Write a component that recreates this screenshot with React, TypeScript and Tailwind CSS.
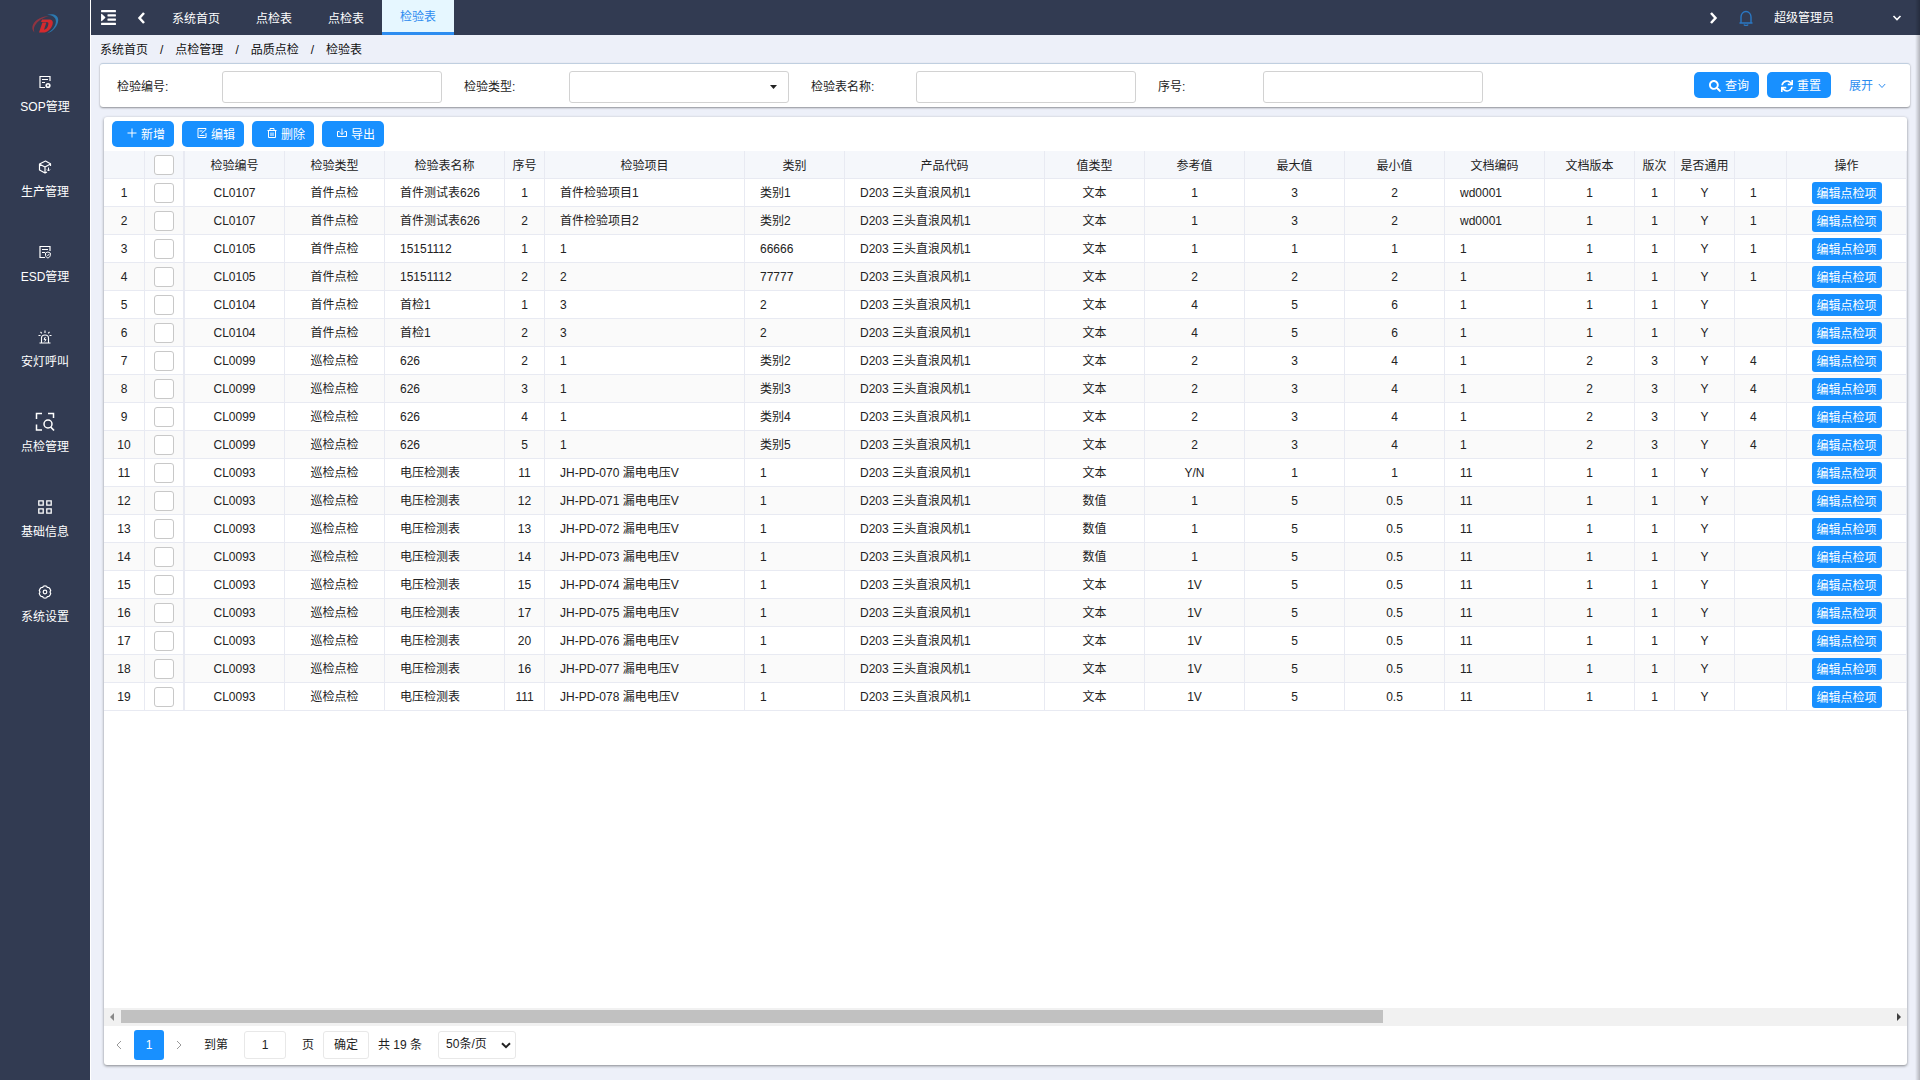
import React from "react";
import { FaIndent, FaSearch, FaSync } from "react-icons/fa";

type Row = [
  code: string, type: string, name: string, seq: string, item: string, category: string,
  valueType: string, ref: string, max: string, min: string, doc: string,
  docVer: string, ver: string, common: string, extra: string,
];

const rows: Row[] = [
  ["CL0107", "首件点检", "首件测试表626", "1", "首件检验项目1", "类别1", "文本", "1", "3", "2", "wd0001", "1", "1", "Y", "1"],
  ["CL0107", "首件点检", "首件测试表626", "2", "首件检验项目2", "类别2", "文本", "1", "3", "2", "wd0001", "1", "1", "Y", "1"],
  ["CL0105", "首件点检", "15151112", "1", "1", "66666", "文本", "1", "1", "1", "1", "1", "1", "Y", "1"],
  ["CL0105", "首件点检", "15151112", "2", "2", "77777", "文本", "2", "2", "2", "1", "1", "1", "Y", "1"],
  ["CL0104", "首件点检", "首检1", "1", "3", "2", "文本", "4", "5", "6", "1", "1", "1", "Y", ""],
  ["CL0104", "首件点检", "首检1", "2", "3", "2", "文本", "4", "5", "6", "1", "1", "1", "Y", ""],
  ["CL0099", "巡检点检", "626", "2", "1", "类别2", "文本", "2", "3", "4", "1", "2", "3", "Y", "4"],
  ["CL0099", "巡检点检", "626", "3", "1", "类别3", "文本", "2", "3", "4", "1", "2", "3", "Y", "4"],
  ["CL0099", "巡检点检", "626", "4", "1", "类别4", "文本", "2", "3", "4", "1", "2", "3", "Y", "4"],
  ["CL0099", "巡检点检", "626", "5", "1", "类别5", "文本", "2", "3", "4", "1", "2", "3", "Y", "4"],
  ["CL0093", "巡检点检", "电压检测表", "11", "JH-PD-070 漏电电压V", "1", "文本", "Y/N", "1", "1", "11", "1", "1", "Y", ""],
  ["CL0093", "巡检点检", "电压检测表", "12", "JH-PD-071 漏电电压V", "1", "数值", "1", "5", "0.5", "11", "1", "1", "Y", ""],
  ["CL0093", "巡检点检", "电压检测表", "13", "JH-PD-072 漏电电压V", "1", "数值", "1", "5", "0.5", "11", "1", "1", "Y", ""],
  ["CL0093", "巡检点检", "电压检测表", "14", "JH-PD-073 漏电电压V", "1", "数值", "1", "5", "0.5", "11", "1", "1", "Y", ""],
  ["CL0093", "巡检点检", "电压检测表", "15", "JH-PD-074 漏电电压V", "1", "文本", "1V", "5", "0.5", "11", "1", "1", "Y", ""],
  ["CL0093", "巡检点检", "电压检测表", "17", "JH-PD-075 漏电电压V", "1", "文本", "1V", "5", "0.5", "11", "1", "1", "Y", ""],
  ["CL0093", "巡检点检", "电压检测表", "20", "JH-PD-076 漏电电压V", "1", "文本", "1V", "5", "0.5", "11", "1", "1", "Y", ""],
  ["CL0093", "巡检点检", "电压检测表", "16", "JH-PD-077 漏电电压V", "1", "文本", "1V", "5", "0.5", "11", "1", "1", "Y", ""],
  ["CL0093", "巡检点检", "电压检测表", "111", "JH-PD-078 漏电电压V", "1", "文本", "1V", "5", "0.5", "11", "1", "1", "Y", ""],
];

const PRODUCT = "D203 三头直浪风机1";

type Column = { title: string; width: string; left?: boolean; value: (r: Row) => string };

const columns: Column[] = [
  { title: "检验编号", width: "w-[100px]", value: (r) => r[0] },
  { title: "检验类型", width: "w-[100px]", value: (r) => r[1] },
  { title: "检验表名称", width: "w-[120px]", left: true, value: (r) => r[2] },
  { title: "序号", width: "w-[40px]", value: (r) => r[3] },
  { title: "检验项目", width: "w-[200px]", left: true, value: (r) => r[4] },
  { title: "类别", width: "w-[100px]", left: true, value: (r) => r[5] },
  { title: "产品代码", width: "w-[200px]", left: true, value: () => PRODUCT },
  { title: "值类型", width: "w-[100px]", value: (r) => r[6] },
  { title: "参考值", width: "w-[100px]", value: (r) => r[7] },
  { title: "最大值", width: "w-[100px]", value: (r) => r[8] },
  { title: "最小值", width: "w-[100px]", value: (r) => r[9] },
  { title: "文档编码", width: "w-[100px]", left: true, value: (r) => r[10] },
  { title: "文档版本", width: "w-[90px]", value: (r) => r[11] },
  { title: "版次", width: "w-[40px]", value: (r) => r[12] },
  { title: "是否通用", width: "w-[60px]", value: (r) => r[13] },
  { title: "", width: "", left: true, value: (r) => r[14] },
];

function Svg({ className, box = 16, children }: { className: string; box?: number; children: React.ReactNode }) {
  return (
    <svg className={className} viewBox={`0 0 ${box} ${box}`} fill="none" stroke="currentColor" aria-hidden="true">
      {children}
    </svg>
  );
}

const DocIcon = ({ variant }: { variant: "gear" | "shield" }) => (
  <Svg className="size-[14px]" box={14}>
    <path d="M12 6V1.500H2v11h5M4 4.500h6M4 7.500h3" strokeWidth="1.200" />
    {variant === "gear" ? (
      <>
        <circle cx="10" cy="10.500" r="2.600" fill="currentColor" stroke="none" />
        <circle cx="10" cy="10.500" r="0.900" fill="#323b52" stroke="none" />
      </>
    ) : (
      <path d="M7.500 8l2.400-1 2.400 1v2.200c0 1.300-1 2.200-2.400 2.800-1.400-.6-2.400-1.500-2.400-2.800zM9 9.800l.8.8 1.300-1.500" strokeWidth="1" />
    )}
  </Svg>
);

const menu: { label: string; icon: React.ReactNode }[] = [
  { label: "SOP管理", icon: <DocIcon variant="gear" /> },
  {
    label: "生产管理",
    icon: (
      <Svg className="size-[14px]" box={14}>
        <path d="M12.500 6V3.800L7.500 1 1.500 4v6L7 13V7L1.800 4.200M7 7l5.500-3M7 13l2-1" strokeWidth="1.200" strokeLinejoin="round" />
        <path d="M10.500 7.500v3.500M9 9.500l1.500 1.500L12 9.500" strokeWidth="1" />
      </Svg>
    ),
  },
  { label: "ESD管理", icon: <DocIcon variant="shield" /> },
  {
    label: "安灯呼叫",
    icon: (
      <Svg className="size-[14px]" box={14}>
        <path d="M3.500 13V8a3.500 3 0 0 1 7 0v5M1.500 13h11M7 .5v2.500M2.500 1.800l1.300 1.600M11.500 1.800l-1.300 1.600M.5 5.500h2M11.500 5.500h2" strokeWidth="1.100" />
        <path d="M7.400 7L6 9.400h2L6.700 11.600" strokeWidth="1" />
      </Svg>
    ),
  },
  {
    label: "点检管理",
    icon: (
      <Svg className="size-[20px]" box={20}>
        <path d="M1.500 7V1.500H7M13 1.500h5.500V6M1.500 12.500v5.500H7" strokeWidth="1.500" />
        <circle cx="13" cy="12" r="4" strokeWidth="1.500" />
        <path d="M15.700 15l3.300 3.500" strokeWidth="1.700" />
      </Svg>
    ),
  },
  {
    label: "基础信息",
    icon: (
      <Svg className="size-[14px]" box={14}>
        <path d="M.8.8h4.400v4.400H.8zM8.800.8h4.400v4.400H8.800zM.8 8.800h4.400v4.400H.8zM8.800 8.800h4.400v4.400H8.800z" strokeWidth="1.300" />
      </Svg>
    ),
  },
  {
    label: "系统设置",
    icon: (
      <Svg className="size-[14px]" box={14}>
        <path d="M5.300 1.200Q7 .6 8.700 1.200l.6 1.200 1.500.1q1.400 1.100 1.900 2.900L12 7l.7 1.600q-.5 1.800-1.900 2.900l-1.500.1-.6 1.200q-1.700.6-3.400 0l-.6-1.200-1.500-.1Q1.800 10.400 1.300 8.600L2 7l-.7-1.600q.5-1.800 1.900-2.900l1.500-.1z" strokeWidth="1.200" strokeLinejoin="round" />
        <circle cx="7" cy="7" r="1.800" strokeWidth="1.200" />
      </Svg>
    ),
  },
];

const tools: { label: string; icon: React.ReactNode }[] = [
  { label: "新增", icon: <path d="M5 .5v9M.5 5h9" /> },
  { label: "编辑", icon: <path d="M9 5v4.500H1v-9h8v1M2.500 3h3M2.500 7.500h5M4.500 5.500L9 1.500" /> },
  { label: "删除", icon: <path d="M.5 2.500h9M3 2.500v-2h4v2M1.500 2.500v7h7v-7M4 4.500v3.500M6 4.500v3.500" /> },
  { label: "导出", icon: <path d="M2.500 3.500h-2v5h9v-5h-2M5 .5v6M3 4.500l2 2 2-2" /> },
];

function Sidebar() {
  return (
    <aside className="w-[91px] shrink-0 border-r border-white bg-[#323b52] text-white">
      <div className="flex h-[50px] items-end justify-center pb-4">
        <svg className="h-5 w-[27px]" viewBox="0 0 27 20" aria-label="logo" role="img">
          <path d="M15 .8C21 -.8 26.500 1 26.200 6.500c-.3 5.500-5 11-11.200 13 5-2.800 8.800-7.500 8.900-12C24 3 20 1.200 15 .8z" fill="#2c79b0" />
          <path d="M17 2.200C9 1.500 1.500 7 .4 12.500c-.4 2.300.3 4.500 2.200 6C1.500 16.500 1.600 14 3 11.500 5.500 7 11 3.300 17 2.200z" fill="#8f3441" />
          <path d="M10 5.500h6.500c4 0 5 2 4 5.200-1.300 4-5 7.800-9.500 7.800H7l3.400-10h4l-2.400 7.200c2-.3 3.300-1.900 4.100-4.300.8-2.400.2-3.400-1.700-3.400H9z" fill="#d22a2e" />
        </svg>
      </div>
      <nav>
        {menu.map((m) => (
          <a key={m.label} href="#" className="flex h-[85px] flex-col items-center pt-[21px]">
            <span className="flex h-[22px] items-center">{m.icon}</span>
            <span className="mt-[5px] leading-[18px]">{m.label}</span>
          </a>
        ))}
      </nav>
    </aside>
  );
}

function TopBar() {
  return (
    <header className="flex h-[35px] items-center bg-[#323b52] text-white">
      <button className="ml-[9px]" aria-label="折叠菜单">
        <FaIndent className="h-[17px] w-[17px]" />
      </button>
      <button className="ml-[19px]" aria-label="向左">
        <Svg className="h-3 w-3" box={12}><path d="M8 1L3.500 6 8 11" strokeWidth="2.500" /></Svg>
      </button>
      <nav className="ml-1.5 flex h-full">
        {["系统首页", "点检表", "点检表"].map((t, i) => (
          <a key={i} href="#" className="px-[18px] pt-2.5 leading-[18px]">{t}</a>
        ))}
        <a href="#" className="border-b-[3px] border-[#2d8cf0] bg-[#e6f7ff] px-[18px] pt-2 leading-[18px] text-[#2d8cf0]">检验表</a>
      </nav>
      <button className="ml-auto" aria-label="向右">
        <Svg className="h-3 w-3" box={12}><path d="M4 1l4.500 5L4 11" strokeWidth="2.500" /></Svg>
      </button>
      <button className="ml-[19px] text-[#2a78c4]" aria-label="通知">
        <Svg className="size-4"><path d="M1.500 13h13M3 13V7a5 5.500 0 0 1 10 0v6M6 14.500c.5 1.300 3.500 1.300 4 0" strokeWidth="1.400" /></Svg>
      </button>
      <button className="ml-5 mr-[18px] flex w-[128px] items-center justify-between pt-px">
        <span className="leading-[18px]">超级管理员</span>
        <Svg className="size-2.5" box={10}><path d="M1.500 3L5 6.500 8.500 3" strokeWidth="1.600" /></Svg>
      </button>
    </header>
  );
}

const fields = ["检验编号", "检验类型", "检验表名称", "序号"];

function SearchCard() {
  return (
    <form className="ml-[9px] mr-2.5 flex h-11 items-start rounded-[3px] border-t border-[#c0cfe0] bg-white pl-4 pt-[7px] shadow-[0_1px_2px_rgba(0,0,0,0.4)]">
      {fields.map((f, i) => (
        <div key={f} className="mr-[21px] flex items-center">
          <label htmlFor={`f${i}`} className="w-[106px] pl-px leading-[18px]">{f}:</label>
          {i === 1 ? (
            <div className="relative">
              <select id="f1" defaultValue="" className="h-8 w-[220px] appearance-none rounded-[3px] border border-[#d2d2d2] bg-white px-2">
                <option value=""></option>
              </select>
              <svg className="pointer-events-none absolute right-3 top-[14px] h-1 w-[7px]" viewBox="0 0 7 4" aria-hidden="true">
                <path d="M0 0h7L3.500 4z" fill="#222" />
              </svg>
            </div>
          ) : (
            <input id={`f${i}`} type="text" className="h-8 w-[220px] rounded-[3px] border border-[#d2d2d2] bg-white px-2" />
          )}
        </div>
      ))}
      <div className="ml-auto mr-6 flex items-center pt-px">
        <button type="button" className="flex h-[26px] w-[65px] items-center gap-1 rounded-[5px] bg-[#1890ff] pl-[15px] pt-px text-white">
          <FaSearch className="size-3" />查询
        </button>
        <button type="button" className="ml-2 flex h-[26px] w-[64px] items-center gap-1 rounded-[5px] bg-[#1890ff] pl-[14px] pt-px text-white">
          <FaSync className="size-3" />重置
        </button>
        <a href="#" className="ml-[18px] flex items-center gap-[5px] pt-px text-[#2d8cf0]">
          展开
          <Svg className="size-2" box={8}><path d="M.8 2L4 5.500 7.200 2" /></Svg>
        </a>
      </div>
    </form>
  );
}

const box = "block mx-auto size-5 appearance-none rounded-[3px] border border-[#c8c8c8] bg-white";
const cell = "h-7 border-b border-r border-[#e8eaf2] overflow-hidden";

function DataTable() {
  return (
    <table className="w-full table-fixed border-separate border-spacing-0 leading-[18px]">
      <colgroup>
        <col className="w-[41px]" />
        <col className="w-[40px]" />
        {columns.map((c, i) => <col key={i} className={c.width} />)}
        <col className="w-[120px]" />
      </colgroup>
      <thead>
        <tr className="bg-[#f5f7fb]">
          <th className={cell}></th>
          <th className={`${cell} border-r-2`}><input type="checkbox" aria-label="全选" className={box} /></th>
          {columns.map((c, i) => (
            <th key={i} className={`${cell} whitespace-nowrap pt-0.5 font-normal`}>{c.title}</th>
          ))}
          <th className={`${cell} pt-0.5 font-normal`}>操作</th>
        </tr>
      </thead>
      <tbody>
        {rows.map((r, i) => (
          <tr key={i} className="odd:bg-white even:bg-[#fafafa]">
            <td className={`${cell} text-center`}>{i + 1}</td>
            <td className={`${cell} border-r-2`}>
              <input type="checkbox" aria-label={`选择第${i + 1}行`} className={box} />
            </td>
            {columns.map((c, j) => (
              <td key={j} className={`${cell} whitespace-nowrap ${c.left ? "pl-[15px] text-left" : "text-center"}`}>{c.value(r)}</td>
            ))}
            <td className={cell}>
              <button className="mx-auto block h-[22px] w-[70px] rounded-[3px] bg-[#1890ff] pt-px leading-[22px] text-white">编辑点检项</button>
            </td>
          </tr>
        ))}
      </tbody>
    </table>
  );
}

function ScrollBar() {
  return (
    <div className="mt-auto flex h-[18px] items-start bg-[#f1f1f1] px-[5px] pt-0.5">
      <svg className="ml-px mt-[3px] h-2 w-1" viewBox="0 0 4 8" aria-hidden="true"><path d="M4 0v8L0 4z" fill="#8a8a8a" /></svg>
      <div className="ml-[7px] mr-2 h-[13px] flex-1">
        <div className="h-full w-[71.4%] bg-[#c1c1c1]" />
      </div>
      <svg className="mr-px mt-[3px] h-2 w-1" viewBox="0 0 4 8" aria-hidden="true"><path d="M0 0v8l4-4z" fill="#404040" /></svg>
    </div>
  );
}

function Pager() {
  return (
    <div className="flex h-[39px] items-center pb-px pl-2.5 leading-[18px]">
      <button aria-label="上一页" className="text-[#999]">
        <Svg className="size-2.5" box={10}><path d="M7 1L3 5l4 4" /></Svg>
      </button>
      <button className="ml-2.5 size-[30px] rounded-[3px] bg-[#1890ff] text-white">1</button>
      <button aria-label="下一页" className="ml-2.5 text-[#999]">
        <Svg className="size-2.5" box={10}><path d="M3 1l4 4-4 4" /></Svg>
      </button>
      <label htmlFor="page" className="ml-5">到第</label>
      <input id="page" type="text" defaultValue="1" className="ml-4 h-7 w-[42px] rounded-[3px] border border-[#e8e8e8] text-center" />
      <span className="ml-4">页</span>
      <button className="ml-[9px] h-7 w-[46px] rounded-[3px] border border-[#e8e8e8]">确定</button>
      <span className="ml-[9px]">共 19 条</span>
      <div className="relative ml-4">
        <select aria-label="每页条数" className="h-7 w-[78px] appearance-none rounded-[3px] border border-[#e8e8e8] bg-white pb-0.5 pl-[7px]">
          <option>50条/页</option>
        </select>
        <svg className="pointer-events-none absolute right-[5px] top-[11px] h-[7px] w-2.5" viewBox="0 0 10 7" fill="none" aria-hidden="true">
          <path d="M1 1.200l4 4 4-4" stroke="#222" strokeWidth="2" />
        </svg>
      </div>
    </div>
  );
}

export default function App() {
  return (
    <div className="flex min-h-screen bg-[#edf0f9] font-['Liberation_Sans','Noto_Sans_CJK_SC',sans-serif] text-xs text-[#222]">
      <Sidebar />
      <div className="relative flex min-w-0 flex-1 flex-col">
        <TopBar />
        <nav className="flex h-7 pl-[9px] pt-1.5 leading-[18px] text-[#111]">
          {["系统首页", "点检管理", "品质点检", "检验表"].map((t, i) => (
            <React.Fragment key={t}>
              {i > 0 && <span className="mx-3">/</span>}
              <a href="#">{t}</a>
            </React.Fragment>
          ))}
        </nav>
        <SearchCard />
        <main className="mb-[15px] ml-[13px] mr-[13px] mt-2.5 flex flex-1 flex-col overflow-hidden rounded-[3px] bg-white shadow-[0_1px_3px_rgba(0,0,0,0.45)]">
          <div className="flex gap-2 px-2 py-1">
            {tools.map((t) => (
              <button key={t.label} className="flex h-[26px] items-center gap-1 rounded-[5px] bg-[#1890ff] pl-[15px] pr-[9px] text-white">
                <Svg className="mb-0.5 size-2.5" box={10}>{t.icon}</Svg>
                <span className="pt-px">{t.label}</span>
              </button>
            ))}
          </div>
          <DataTable />
          <ScrollBar />
          <Pager />
        </main>
        <div className="pointer-events-none absolute inset-y-0 right-0 w-[5px] bg-linear-to-r from-transparent to-black/25" />
      </div>
    </div>
  );
}
